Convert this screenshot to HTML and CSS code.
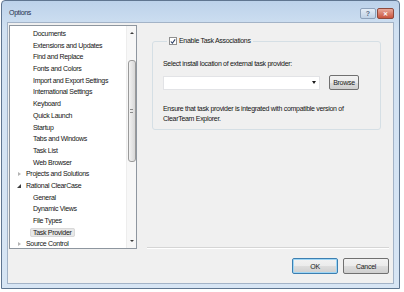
FILE: index.html
```
<!DOCTYPE html>
<html lang="en">
<head>
    <meta charset="UTF-8">
    <title>Options</title>
    <link rel="stylesheet" href="styles.css">
</head>
<body>
    <div class="window">
        <div class="titlebar">
            <span class="title">Options</span>
            <div class="caption-buttons">
                <span class="cap-btn help">?</span>
                <span class="cap-btn close">&#x2715;</span>
            </div>
        </div>
        <div class="client">
            <div class="main">
                <div class="tree">
                    <ul class="items">
                        <li class="sub">Documents</li>
                        <li class="sub">Extensions and Updates</li>
                        <li class="sub">Find and Replace</li>
                        <li class="sub">Fonts and Colors</li>
                        <li class="sub">Import and Export Settings</li>
                        <li class="sub">International Settings</li>
                        <li class="sub">Keyboard</li>
                        <li class="sub">Quick Launch</li>
                        <li class="sub">Startup</li>
                        <li class="sub">Tabs and Windows</li>
                        <li class="sub">Task List</li>
                        <li class="sub">Web Browser</li>
                        <li class="top"><span class="arrow closed"></span>Projects and Solutions</li>
                        <li class="top"><span class="arrow open"></span>Rational ClearCase</li>
                        <li class="sub">General</li>
                        <li class="sub">Dynamic Views</li>
                        <li class="sub">File Types</li>
                        <li class="sub"><span class="selected">Task Provider</span></li>
                        <li class="top"><span class="arrow closed"></span>Source Control</li>
                    </ul>
                    <div class="scrollbar">
                        <span class="sb-arrow up"></span>
                        <div class="track">
                            <div class="thumb"><span class="grip"></span></div>
                        </div>
                        <span class="sb-arrow down"></span>
                    </div>
                </div>
                <div class="pane">
                    <fieldset class="group">
                        <legend><span class="checkbox"><svg width="7" height="7" viewBox="0 0 7 7"><path d="M1 3.5 L2.8 5.5 L6 1" fill="none" stroke="#2b3f66" stroke-width="1.3"/></svg></span>Enable Task Associations</legend>
                        <p class="label">Select install location of external task provider:</p>
                        <div class="row">
                            <div class="combo"><span class="combo-arrow"></span></div>
                            <button class="btn browse">Browse</button>
                        </div>
                        <p class="note">Ensure that task provider is integrated with compatible version of ClearTeam Explorer.</p>
                    </fieldset>
                    <div class="separator"></div>
                </div>
            </div>
            <div class="footer">
                <button class="btn default">OK</button>
                <button class="btn">Cancel</button>
            </div>
        </div>
    </div>
</body>
</html>
```

FILE: styles.css
```
body {
    margin: 0;
    background: #ffffff;
    font-family: "Liberation Sans", Arial, sans-serif;
    font-size: 7px;
    letter-spacing: -0.3px;
    color: #141414;
}
.window {
    width: 399px;
    height: 289px;
    border: 1px solid #5f7590;
    border-radius: 4px 4px 0 0;
    background: linear-gradient(180deg, #bcd2ea 0%, #d1e1f2 10%, #d7e5f4 100%);
    display: flex;
    flex-direction: column;
    box-sizing: border-box;
    margin-left: 1px;
}
.titlebar {
    height: 21px;
    display: flex;
    align-items: center;
    justify-content: space-between;
    padding: 0 5px 0 7px;
    flex-shrink: 0;
}
.title {
    color: #1e2f4c;
    margin-top: 2px;
}
.caption-buttons {
    display: flex;
    gap: 1px;
    align-self: flex-start;
    padding-top: 7px;
}
.cap-btn {
    height: 9px;
    border: 1px solid #8ea2bb;
    border-radius: 2px;
    display: flex;
    align-items: center;
    justify-content: center;
    font-size: 7px;
    font-weight: bold;
    letter-spacing: 0;
}
.help {
    width: 14px;
    background: linear-gradient(180deg, #e5eef8, #bfd1e5);
    color: #5a6d86;
}
.close {
    width: 15px;
    background: linear-gradient(180deg, #e9a99a, #c9543d);
    border-color: #8e4a3c;
    color: #ffffff;
    font-size: 6px;
}
.client {
    flex: 1;
    margin: 0 5px 4px 5px;
    background: #f0f0f0;
    border: 1px solid #a3b3c7;
    display: flex;
    flex-direction: column;
    padding: 2px 4px 0 1px;
}
.main {
    display: flex;
    height: 224px;
}
.tree {
    width: 128px;
    height: 224px;
    box-sizing: border-box;
    border: 1px solid #8e969f;
    background: #ffffff;
    display: flex;
    flex-shrink: 0;
}
.items {
    list-style: none;
    margin: 0;
    padding: 2px 0 0 0;
    flex: 1;
    overflow: hidden;
}
.items li {
    height: 11.7px;
    line-height: 11.7px;
    white-space: nowrap;
}
.items .sub {
    padding-left: 23px;
}
.items .top {
    padding-left: 6px;
}
.arrow {
    display: inline-block;
    vertical-align: 0;
}
.arrow.closed {
    width: 0;
    height: 0;
    border-left: 3px solid #b4b4b4;
    border-top: 2.5px solid transparent;
    border-bottom: 2.5px solid transparent;
    margin-left: 2px;
    margin-right: 5px;
}
.arrow.open {
    width: 0;
    height: 0;
    border-right: 4px solid #3c3c3c;
    border-top: 4px solid transparent;
    margin-left: 1px;
    margin-right: 5px;
}
.selected {
    background: #e8e8e8;
    border: 1px solid #d9d9d9;
    border-radius: 2px;
    padding: 0 2px;
    margin-left: -3px;
}
.scrollbar {
    width: 9px;
    display: flex;
    flex-direction: column;
    align-items: center;
    background: #f7f7f7;
    border-left: 1px solid #ededed;
}
.sb-arrow {
    width: 0;
    height: 0;
    margin: 6px 0 4px 0;
    border-left: 2px solid transparent;
    border-right: 2px solid transparent;
}
.sb-arrow.up {
    border-bottom: 2px solid #3c3c3c;
}
.sb-arrow.down {
    border-top: 2px solid #3c3c3c;
    margin: 4px 0 6px 0;
}
.track {
    flex: 1;
    width: 100%;
    padding-top: 22px;
}
.thumb {
    width: 8px;
    height: 102px;
    margin: 0 auto;
    box-sizing: border-box;
    border: 1px solid #9a9a9a;
    border-radius: 3px;
    background: linear-gradient(90deg, #f2f2f2, #d8d8d8);
    display: flex;
    align-items: center;
    justify-content: center;
}
.grip {
    width: 3px;
    height: 4px;
    border-top: 1px solid #8a8a8a;
    border-bottom: 1px solid #8a8a8a;
    box-sizing: border-box;
}
.pane {
    flex: 1;
    display: flex;
    flex-direction: column;
}
.group {
    margin: 11px 8px 0 15px;
    border: 1px solid #d5dfe5;
    border-radius: 3px;
    padding: 0 10px 5px 10px;
    min-width: 0;
}
.group legend {
    padding: 0 2px;
    margin-left: 4px;
    display: flex;
    align-items: center;
    gap: 2px;
    line-height: 10px;
}
.checkbox {
    width: 8px;
    height: 8px;
    box-sizing: border-box;
    border: 1px solid #8f8f8f;
    background: #ffffff;
    display: flex;
    align-items: center;
    justify-content: center;
}
.checkbox svg {
    display: block;
}
.label {
    margin: 13px 0 0 0;
    line-height: 10px;
}
.row {
    display: flex;
    align-items: center;
    gap: 9px;
    margin-top: 6px;
}
.combo {
    width: 157px;
    height: 14px;
    box-sizing: border-box;
    background: #ffffff;
    border: 1px solid #e2e3e6;
    display: flex;
    align-items: center;
    justify-content: flex-end;
    padding-right: 3px;
}
.combo-arrow {
    width: 0;
    height: 0;
    border-left: 2px solid transparent;
    border-right: 2px solid transparent;
    border-top: 3px solid #1a1a1a;
}
.btn {
    font-family: inherit;
    font-size: 7px;
    letter-spacing: -0.3px;
    color: #1a1a1a;
    height: 16px;
    padding: 0;
    border: 1px solid #707070;
    border-radius: 2px;
    background: linear-gradient(180deg, #f2f2f2 0%, #ebebeb 50%, #dddddd 51%, #cfcfcf 100%);
}
.browse {
    width: 30px;
    height: 15px;
}
.note {
    margin: 14px 0 0 0;
    line-height: 10px;
    width: 200px;
}
.separator {
    margin: auto 0 0 10px;
    height: 1px;
    background: #d5d5d5;
    border-bottom: 1px solid #ffffff;
}
.footer {
    display: flex;
    justify-content: flex-end;
    gap: 5px;
    margin-top: 9px;
}
.footer .btn {
    width: 46px;
}
.footer .default {
    border-color: #3c7fb1;
    box-shadow: inset 0 0 0 1px #9fd6f5;
}
```
